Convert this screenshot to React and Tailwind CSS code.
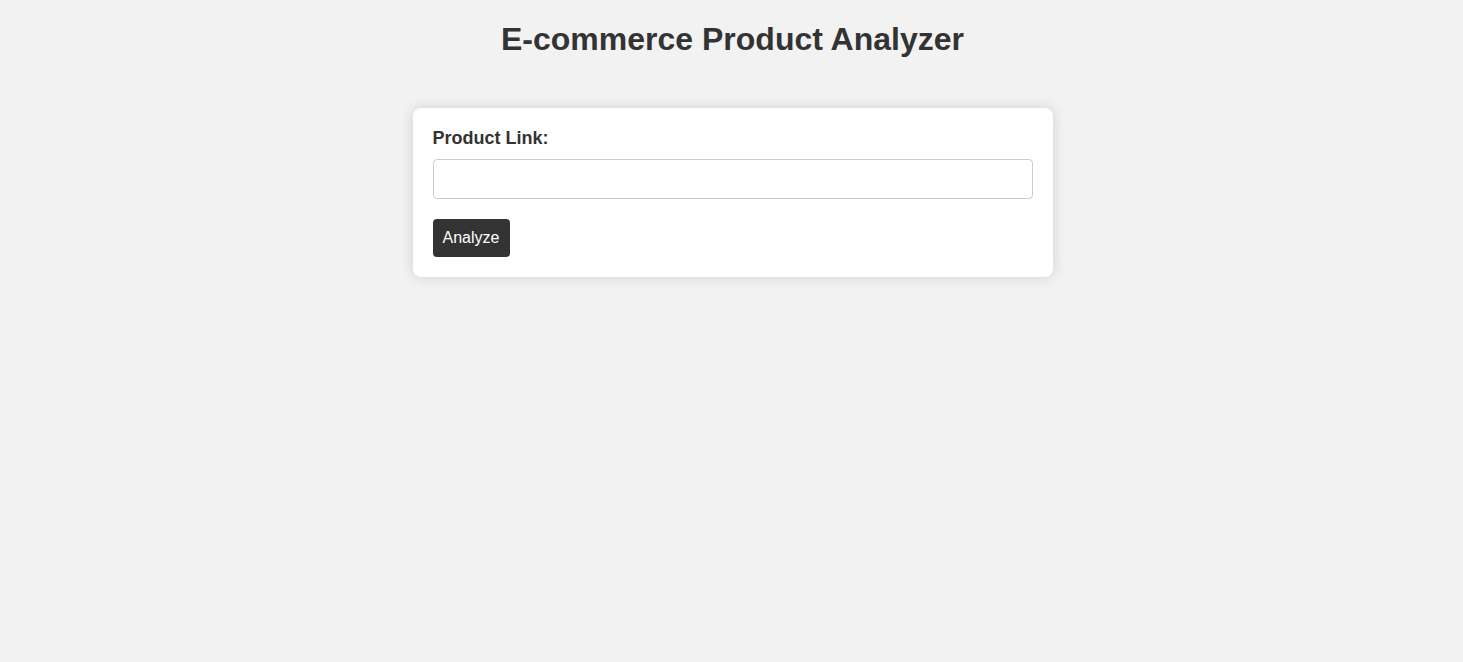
export default function App() {
  return (
    <div className="min-h-[662px] bg-[#f2f2f2] pl-[2px] font-['Liberation_Sans',Arial,sans-serif] text-[#333]">
      <h1 className="pt-[21px] text-center text-[32px] leading-[37px] font-bold">
        E-commerce Product Analyzer
      </h1>

      <div className="mx-auto mt-[50px] w-[640px] rounded-lg bg-white p-5 shadow-[0_0_14px_rgba(0,0,0,0.14)]">
        <label className="block text-[18px] leading-[20px] font-bold mb-[11px]">Product Link:</label>
        <input
          type="text"
          className="block h-10 w-full rounded border border-[#ccc] px-2 text-base outline-none"
        />
        <button className="mt-5 block h-[38px] w-[77px] rounded bg-[#333] text-base text-white">
          Analyze
        </button>
      </div>
    </div>
  );
}
